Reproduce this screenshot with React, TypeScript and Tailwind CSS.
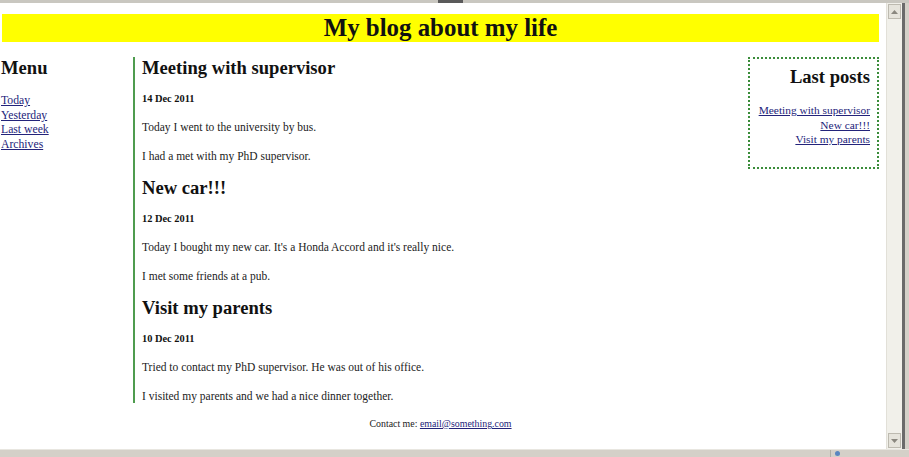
import React from "react";

const serif = { fontFamily: '"Liberation Serif", "Times New Roman", serif' };

type Post = { title: string; date: string; lines: string[] };

const posts: Post[] = [
  {
    title: "Meeting with supervisor",
    date: "14 Dec 2011",
    lines: ["Today I went to the university by bus.", "I had a met with my PhD supervisor."],
  },
  {
    title: "New car!!!",
    date: "12 Dec 2011",
    lines: ["Today I bought my new car. It's a Honda Accord and it's really nice.", "I met some friends at a pub."],
  },
  {
    title: "Visit my parents",
    date: "10 Dec 2011",
    lines: ["Tried to contact my PhD supervisor. He was out of his office.", "I visited my parents and we had a nice dinner together."],
  },
];

function PostBlock({ post, first }: { post: Post; first: boolean }) {
  return (
    <div className={first ? "" : "mt-[14px]"}>
      <h2 className="text-[18.6px] leading-[22px] font-bold text-[#111]">{post.title}</h2>
      <p className="mt-[13px] text-[10.4px] leading-[13px] font-bold text-[#111]">{post.date}</p>
      <p className="mt-[15px] text-[11.5px] leading-[14px] text-[#222]">{post.lines[0]}</p>
      <p className="mt-[15px] text-[11.5px] leading-[14px] text-[#222]">{post.lines[1]}</p>
    </div>
  );
}

export default function App() {
  return (
    <div className="w-[909px] h-[457px] flex flex-col bg-[#d4d0c8] overflow-hidden" style={serif}>
      {/* top strip */}
      <div className="h-[3px] flex bg-[#c9c7c0]">
        <div className="w-[438px]" />
        <div className="w-[25px] bg-[#5a5a5a]" />
      </div>
      {/* middle */}
      <div className="flex h-[446px]">
        <div className="w-[886px] bg-white flex flex-col">
          <div className="mt-[11px] ml-[2px] w-[877px] h-[28px] bg-[#ffff00] flex items-center justify-center">
            <h1 className="text-[24.9px] leading-[28px] font-bold text-[#111]">My blog about my life</h1>
          </div>
          <div className="mt-[15px] flex items-start">
            <div className="w-[133px] pl-[1px]">
              <h2 className="text-[18.6px] leading-[22px] font-bold text-[#111]">Menu</h2>
              <div className="mt-[15px] flex flex-col text-[11.7px] leading-[14.6px]">
                <a href="#" className="text-[#23237a] underline w-fit">Today</a>
                <a href="#" className="text-[#23237a] underline w-fit">Yesterday</a>
                <a href="#" className="text-[#23237a] underline w-fit">Last week</a>
                <a href="#" className="text-[#23237a] underline w-fit">Archives</a>
              </div>
            </div>
            <div className="flex-1 border-l-2 border-[#4f9c4f] pl-[7px]">
              {posts.map((p, i) => (
                <PostBlock key={p.title} post={p} first={i === 0} />
              ))}
            </div>
            <div className="w-[131px] h-[112px] mr-[7px] border-2 border-dotted border-[#3a8c3a] pt-[7px] pr-[7px] text-right">
              <h2 className="text-[18.6px] leading-[22px] font-bold text-[#111]">Last posts</h2>
              <div className="mt-[15px] flex flex-col items-end text-[11.4px] leading-[14.7px]">
                <a href="#" className="text-[#23237a] underline">Meeting with supervisor</a>
                <a href="#" className="text-[#23237a] underline">New car!!!</a>
                <a href="#" className="text-[#23237a] underline">Visit my parents</a>
              </div>
            </div>
          </div>
          <div className="mt-[15px] ml-[2px] w-[877px] text-center text-[9.9px] leading-[12px] text-[#222]">
            Contact me: <a href="#" className="text-[#23237a] underline">email@something.com</a>
          </div>
        </div>
        {/* scrollbar */}
        <div className="w-[16px] bg-[#f1f0ea] flex flex-col justify-between border-l border-[#e2e0d8]">
          <div className="mt-[1px] mx-[1px] h-[15px] bg-[#e6e4dc] border border-[#bdbab0] flex items-center justify-center">
            <svg width="7" height="4" viewBox="0 0 7 4"><path d="M0 4 L3.5 0 L7 4 Z" fill="#8a877f" /></svg>
          </div>
          <div className="mb-[1px] mx-[1px] h-[15px] bg-[#e6e4dc] border border-[#bdbab0] flex items-center justify-center">
            <svg width="7" height="4" viewBox="0 0 7 4"><path d="M0 0 L3.5 4 L7 0 Z" fill="#8a877f" /></svg>
          </div>
        </div>
        <div className="w-[3px] bg-[#6a6a6a]" />
        <div className="flex-1 bg-[#d4d0c8]" />
      </div>
      {/* bottom status bar */}
      <div className="flex-1 flex border-t border-[#e8e6e0] bg-[#d4d0c8]">
        <div className="w-[830px]" />
        <div className="w-[55px] border-l border-[#b0ada4] flex items-start pl-[4px]">
          <div className="w-[5px] h-[5px] rounded-full bg-[#5a86c0] mt-[1px]" />
        </div>
      </div>
    </div>
  );
}
